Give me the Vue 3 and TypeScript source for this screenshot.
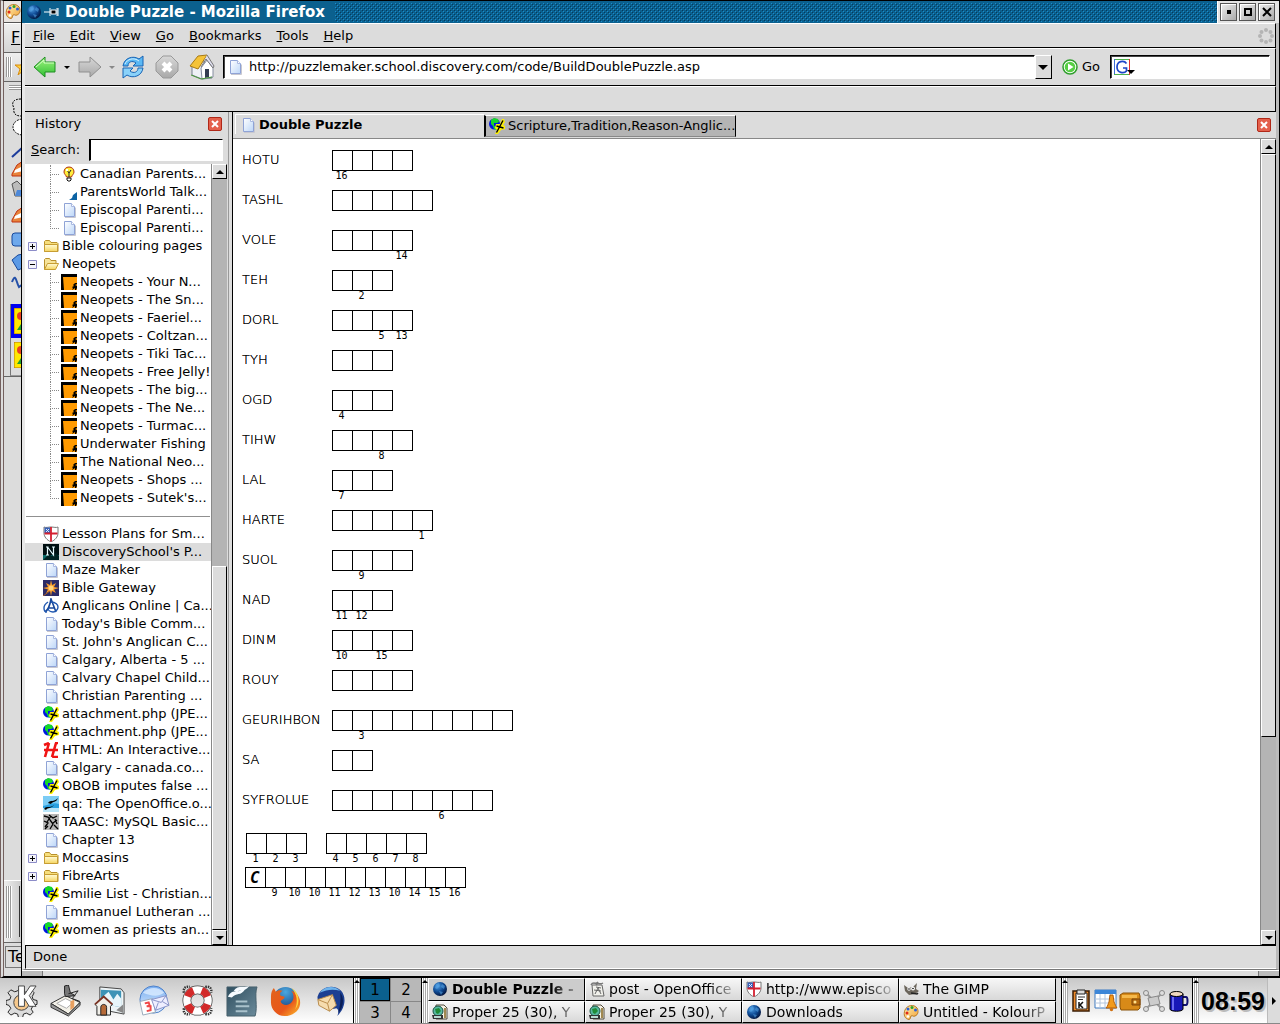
<script setup lang="ts">
interface TreeRow {
  label?: string
  icon?: string
  nested?: boolean
  last?: boolean
  fold?: 'open' | 'closed'
  selected?: boolean
  rule?: boolean
}

interface Word {
  text: string
  cells: string[]
}

const icons: Record<string, string> = {
  page: '<path d="M3.500 1.500h7l3 3v10h-10z" fill="url(#gPage)" stroke="#8fa3d6"/><path d="M10.500 1.500v3h3" fill="#fff" stroke="#a9b8e0"/><path d="M4 15.500h10.500v-10" fill="none" stroke="#c8c8d0"/>',
  folder: '<path d="M1.500 13.500v-10l1-1h4l1.500 2h6l1 1v8z" fill="#f7df7c" stroke="#b8902c"/><path d="M1.500 13.500v-7h13v7z" fill="url(#gFold)" stroke="#c79d33"/>',
  folderOpen: '<path d="M1.500 13.500v-10l1-1h4l1.500 2h5v3" fill="#f7e49a" stroke="#b8902c"/><path d="M1.500 13.500l3-6h11l-3 6z" fill="url(#gFold)" stroke="#c79d33"/>',
  bulb: '<path d="M8 1c3 0 5 2 5 5 0 2-2 3-2.500 5h-5C5 9 3 8 3 6c0-3 2-5 5-5z" fill="#ffee3c" stroke="#b03010"/><path d="M6 4l2 3 2-3M8 7v4" stroke="#222" fill="none"/><path d="M6 12h4v2l-1 1H7l-1-1z" fill="#fff" stroke="#111"/><path d="M5 3h2v2H5z" fill="#fff"/>',
  corner: '<path d="M16 8v8H8l3-2 1-3z" fill="#0c63a4"/>',
  neo: '<path d="M0 0h16v16H0z" fill="#000"/><path d="M2 3h14v13H3z" fill="#ff9a00"/><path d="M11 16l1-2-1-1 2-1-1-1 2-2h2v1l-2 1 2 1v2l-1 2h-1v-2z" fill="#000"/>',
  shield: '<path d="M1 1c2 1 4 0 7 0s5 1 7 0v6c0 4-3 7-7 9-4-2-7-5-7-9z" fill="#fff" stroke="#777"/><path d="M1.500 1.500h6V7h-6z" fill="#3a63b8"/><path d="M8 1v14.500M1.500 7.500h13" stroke="#d42030" stroke-width="1.800"/><path d="M3 3l3 3M6 3L3 6" stroke="#dfe8ff"/>',
  disc: '<path d="M0 0h16v16H0z" fill="#001012"/><path d="M0 11h16v5H0z" fill="#0a6a68"/><path d="M0 16l6-6 3 2 4-3 3 3v4z" fill="#022"/><path d="M3 3h2.500M4.500 3v8M3 11h3M4.500 3l6 8V3M9 3h3" stroke="#e8fbff" fill="none" stroke-width="1.200"/>',
  gateway: '<path d="M0 0h16v16H0z" fill="#2b2a66"/><path d="M8 0l1.200 5L13 3l-2 4 5 1-5 1.500 2 3.500-4-2-1 5-1-5-4 2 2-3.500L0 8l5-1-2-4 4 2z" fill="#f59a2c"/><circle cx="8" cy="8" r="2.500" fill="#ffd27a"/><path d="M0 16l7-5" stroke="#a65f28"/>',
  anglican: '<path d="M2 14c3-2 5-7 6-13l5 13M5 10h6" fill="none" stroke="#17479a" stroke-width="1.600"/><path d="M8 4c5 0 7 3 7 5s-2 5-5 5-5-2-5-4M5 4C2 6 1 8 1 10s1 4 3 4" fill="none" stroke="#2158b0" stroke-width="1.400"/>',
  ship: '<circle cx="5.500" cy="6" r="5.500" fill="#0018e0"/><path d="M2 2l3-2 4 1 1 3-2 1H5v3l3 1v3l-3-1-1-3-2-2z" fill="#14d828"/><path d="M6 16l2-4-2-2 1-4h4l2-5h2l1 3-2 3 2 1v3l-4 1-3 4z" fill="#fff200"/><path d="M7.500 14.500L14 2.500M7.500 8l7 2" stroke="#000" stroke-width="1.400" fill="none"/>',
  h: '<path d="M1 3l5-2M6 1L2 15M13 1l-4 14M12 1h3M1 8h14M9 15h6" stroke="#f01414" stroke-width="2.600" fill="none"/>',
  oo: '<path d="M0 0h16v16H0z" fill="#2aa0e0"/><path d="M0 0h16v8C10 6 6 9 0 10z" fill="#7cccf4"/><path d="M0 12h16v4H0z" fill="#b9e6fa"/><path d="M5 7c3-4 5 0 10-5-2 5-5 3-7 6zM1 13c3-4 5 0 10-4-3 4-6 2-8 5z" fill="#000"/>',
  taasc: '<path d="M0 0h16v16H0z" fill="#b6b6b6"/><path d="M1 2l4 1 2 3M6 1l4 3 4-2M1 7l4 2-3 4M7 6l3 4-3 5M10 9l4-3M11 11l4 4M2 15l3-3M8 2l-4 6M12 5l2 5" stroke="#000" stroke-width="1.300" fill="none"/>',
  globe: '<circle cx="8" cy="8" r="7" fill="url(#gGlobe)"/><path d="M4 3l3-1 1 3-3 3-2-1zM10 3l3 2-1 3-3-2zM7 10l4 1-2 3z" fill="#5aa7e8" opacity=".55"/>',
  palette: '<path d="M2 6C4 1 11 0 14 4c2 3 1 7-2 8-2 1-2-1-4 0-1 1 0 3-2 3.500C2 15 0 11 2 6z" fill="url(#gPal)" stroke="#b97a24"/><circle cx="5" cy="5" r="1.500" fill="#2a60d8"/><circle cx="9" cy="3.500" r="1.500" fill="#2ba52b"/><circle cx="12.500" cy="6" r="1.500" fill="#2a60d8"/><circle cx="4" cy="9" r="1.500" fill="#e02a1a"/><circle cx="5" cy="12.500" r="1.300" fill="#fff"/>',
  go: '<circle cx="8" cy="8" r="7" fill="#fff" stroke="#2f9e2c" stroke-width="1.500"/><circle cx="8" cy="8" r="5.300" fill="#55cf43"/><path d="M6 4.500v7L11.500 8z" fill="#fff"/>',
  google: '<path d="M.5.5h15v15H.5z" fill="#fff"/><path d="M0 .5h15" stroke="#4fb04f"/><path d="M.5 0v15" stroke="#3c6bd8"/><path d="M15.500 0v16" stroke="#e03030"/><path d="M0 15.500h15" stroke="#4fb04f"/><path d="M12.500 4.500C10 1 3 2 3 8s7 7 9.500 4V9H9" fill="none" stroke="#1d46c8" stroke-width="1.700"/>',
  post: '<path d="M3 4h10l2 11H4z" fill="#f1f1ec" stroke="#666"/><path d="M2 4c2-4 5 0 7-3M7 4c2-3 4 0 7-2" stroke="#777" fill="none" stroke-width="1.500"/><path d="M6 13l3-6 3 6M5 9l7 1M7 6l5 1" stroke="#666" fill="none"/>',
  web: '<path d="M4 1h8l3 3v11H4z" fill="#f5f1e4" stroke="#504a3c"/><path d="M13 4v10" stroke="#a08850" stroke-width="2"/><circle cx="6" cy="7" r="5" fill="#58b8a0" stroke="#175040"/><path d="M3 5l4-1 2 3-3 3-2-1z" fill="#1f8b36"/><path d="M0 11h11v4H1z" fill="#333"/><path d="M2 12h7v2H2z" fill="#b8d8d0"/>',
  gimp: '<path d="M1 4l4 3 5-1 4-4-1 6 3 2-4 3-6 1-4-4z" fill="#6b655b"/><circle cx="6" cy="8" r="1.700" fill="#fff"/><circle cx="10" cy="7.500" r="1.900" fill="#fff"/><circle cx="10" cy="7.500" r=".8"/><circle cx="6" cy="8" r=".8"/><path d="M8 12l6 1 1-1" stroke="#222" stroke-width="1.500" fill="none"/>',
}

const bigIcons: Record<string, string> = {
  kmenu: '<path d="M14 3h4l1 4 4 1 3-3 3 3-2 4 1 3 4 1v4l-4 1-2 4 2 3-3 3-4-2-3 1-1 4h-4l-1-4-3-1-4 2-3-3 3-4-2-3-3-1v-4l4-1 1-3-3-4 3-3 4 2 3-1z" fill="#dcdcdc" stroke="#222"/><circle cx="16" cy="18" r="8" fill="#f6c88c" stroke="#444"/><path d="M13 1h6v9l6-9h6l-7 10 7 11h-7l-5-8v8h-6z" fill="#fff" stroke="#444"/>',
  desk: '<path d="M1 19l15-8 15 7-12 12z" fill="#f3f1e8" stroke="#333"/><path d="M1 19v4l18 9 12-11v-3L19 30z" fill="#999" stroke="#333"/><path d="M7 19l9-5 8 4-7 6z" fill="#fff" stroke="#aaa"/><path d="M15 1l4-1 2 8 5 3-10 1-1-3z" fill="#777" stroke="#222"/><path d="M21 17l4-2v8l-4 3z" fill="#e8a060"/><path d="M19 9l10-3-6 8 8 3" stroke="#222" fill="none"/>',
  home: '<path d="M6 2l22 2 3 4v22l-25-5z" fill="#eef4f6" stroke="#444"/><path d="M7 5l21 1v17L7 19z" fill="#3d93b6"/><path d="M7 14l8-7 5 8 4-6 4 5v9L7 19z" fill="#e8f5fa"/><path d="M1 20l9-8 9 8-2 2v9H3v-9z" fill="#f1efe9" stroke="#222"/><path d="M1 20l9-8 9 8" stroke="#7c3525" stroke-width="2" fill="none"/><path d="M7 31v-8c0-4 6-4 6 0v8z" fill="#b66a38" stroke="#222"/><path d="M23 26l7-6v9z" fill="#888"/>',
  contact: '<circle cx="16" cy="15" r="14" fill="url(#gContact)" stroke="#4d80c8"/><path d="M5 8c7-7 17-6 22 0-7 5-14 3-22 0z" fill="#dcecff" opacity=".8"/><path d="M2 17l13-3 3 14-13 3z" fill="#fff" stroke="#9ab"/><path d="M7 19l4-1 1 3-3 1 4 0 0 4-4 1" stroke="#f04848" stroke-width="2" fill="none"/><path d="M14 15l15-4 3 10-14 5z" fill="#eef" stroke="#8893c8"/><path d="M14 15l10 3 5-7M18 26l3-8M32 21l-7-4" stroke="#8893c8" fill="none"/>',
  ring: '<path d="M2 8c-1-5 2-7 6-6M24 2c5-1 7 2 6 6M2 24c-1 5 2 7 6 6M24 30c5 1 7-2 6-6" fill="none" stroke="#333" stroke-width="2.500" stroke-dasharray="1.500 1"/><circle cx="16" cy="16" r="11" fill="none" stroke="#444" stroke-width="9"/><circle cx="16" cy="16" r="11" fill="none" stroke="#fff" stroke-width="7.500"/><circle cx="16" cy="16" r="11" fill="none" stroke="#d22a2a" stroke-width="7.500" stroke-dasharray="8.640 8.640" stroke-dashoffset="-4"/>',
  office: '<path d="M1 2h31c-3 8 1 20-2 30H1z" fill="url(#gOffice)" stroke="#46606c"/><path d="M2 12c5-9 8-3 18-8-5 8-9 3-14 9zM8 6c5-7 8-2 16-5-5 7-9 3-13 6z" fill="#f6fbff"/><path d="M10 17h12M10 22h14M10 27h12" stroke="#aac2cc" stroke-width="2"/>',
  firefox: '<circle cx="16" cy="15" r="13" fill="url(#gGlobe2)"/><path d="M1 12c0-4 1-7 3-9l2 4c2-2 5-2 7-1-3 2-3 3-2 5l4 1c0 3-4 3-4 5 1 4 8 5 11 1 3-3 3-8 0-12 6 2 10 8 9 14-1 7-8 12-16 12C7 32 1 25 1 18z" fill="url(#gFox)"/><path d="M22 3c8 4 10 15 4 22 3-8 2-16-4-22z" fill="#ffd23c"/>',
  bird: '<path d="M4 11C8 1 21-1 28 6c6 7 4 18-4 26 2-5 1-7-1-8-6 2-14 0-18-6-1-3-2-5-1-7z" fill="#1c3f92"/><path d="M6 8c6-8 16-7 21-2-8-2-14-1-21 2z" fill="#6fb4ec"/><path d="M27 8c5 6 3 16-2 21 2-8 3-14 2-21z" fill="#0b1f58"/><path d="M4 15l15-5 4 11-7 6-11-6z" fill="#f6dcae" stroke="#b98b4a"/><path d="M4 15l10 4 5-9M14 19l2 8" fill="none" stroke="#b98b4a"/>',
  clip: '<path d="M3 2h16v20H3z" fill="#ee8a2a" stroke="#3a1c04" stroke-width="1.500"/><path d="M6 4h11v16H6z" fill="#fff" stroke="#222"/><path d="M7 1h8v4H7z" fill="#ddd" stroke="#222"/><path d="M8 8h7M8 10.500h5" stroke="#333"/><path d="M9 13v6M13 13l-3 3 3 3" stroke="#111" stroke-width="1.500" fill="none"/>',
  alarm: '<path d="M1 1h21v18H1z" fill="#fff" stroke="#3a78c0"/><path d="M1 1h21v4H1z" fill="#3c86d8"/><path d="M1 10h21M1 14h21M6 5v14M11 5v14M16 5v14" stroke="#b4c6de"/><path d="M16 6l3 0 1 7c1 2 2 5 3 6H12c2-2 2-4 3-6z" fill="#f29a1c" stroke="#b35c08"/><circle cx="17.500" cy="20.500" r="1.700" fill="#d07010"/>',
  wallet: '<path d="M2 6l3-2h16l1 3v12l-2 2H3l-1-3z" fill="#d88a18" stroke="#8a5208"/><path d="M4 6h15v3H4z" fill="#f5b84a"/><path d="M14 10h8v6h-8z" fill="#b46a10" stroke="#7a4408"/><circle cx="17" cy="13" r="1.500" fill="#ffe08a"/>',
  net: '<path d="M4 4l16 16M20 4L4 20" stroke="#999" stroke-width="2"/><path d="M6 9l10-2 2 8-10 2z" fill="#ccc" stroke="#888"/><g fill="#ddd" stroke="#888"><circle cx="4" cy="4" r="2.500"/><circle cx="20" cy="4" r="2.500"/><circle cx="4" cy="20" r="2.500"/><circle cx="20" cy="20" r="2.500"/></g>',
  mug: '<path d="M17 8h3c2 0 2 8 0 8h-3" fill="none" stroke="#101070" stroke-width="2"/><path d="M4 5v15c0 3 13 3 13 0V5z" fill="#1818b8" stroke="#000"/><path d="M7 8v13" stroke="#6a6af0" stroke-width="2"/><ellipse cx="10.500" cy="5" rx="6.500" ry="2.500" fill="#f0d8c0" stroke="#000"/>',
}

const menus = ['File', 'Edit', 'View', 'Go', 'Bookmarks', 'Tools', 'Help']

const neo = (label: string, last = false): TreeRow => ({ label, icon: 'neo', nested: true, last })

const rows: TreeRow[] = [
  { label: 'Canadian Parents...', icon: 'bulb', nested: true },
  { label: 'ParentsWorld Talk...', icon: 'corner', nested: true },
  { label: 'Episcopal Parenti...', icon: 'page', nested: true },
  { label: 'Episcopal Parenti...', icon: 'page', nested: true, last: true },
  { label: 'Bible colouring pages', icon: 'folder', fold: 'closed' },
  { label: 'Neopets', icon: 'folderOpen', fold: 'open' },
  neo('Neopets - Your N...'),
  neo('Neopets - The Sn...'),
  neo('Neopets - Faeriel...'),
  neo('Neopets - Coltzan...'),
  neo('Neopets - Tiki Tac...'),
  neo('Neopets - Free Jelly!'),
  neo('Neopets - The big...'),
  neo('Neopets - The Ne...'),
  neo('Neopets - Turmac...'),
  neo('Underwater Fishing'),
  neo('The National Neo...'),
  neo('Neopets - Shops ...'),
  neo("Neopets - Sutek's...", true),
  { rule: true },
  { label: 'Lesson Plans for Sm...', icon: 'shield' },
  { label: "DiscoverySchool's P...", icon: 'disc', selected: true },
  { label: 'Maze Maker', icon: 'page' },
  { label: 'Bible Gateway', icon: 'gateway' },
  { label: 'Anglicans Online | Ca...', icon: 'anglican' },
  { label: "Today's Bible Comm...", icon: 'page' },
  { label: "St. John's Anglican C...", icon: 'page' },
  { label: 'Calgary, Alberta - 5 ...', icon: 'page' },
  { label: 'Calvary Chapel Child...', icon: 'page' },
  { label: 'Christian Parenting ...', icon: 'page' },
  { label: 'attachment.php (JPE...', icon: 'ship' },
  { label: 'attachment.php (JPE...', icon: 'ship' },
  { label: 'HTML: An Interactive...', icon: 'h' },
  { label: 'Calgary - canada.co...', icon: 'page' },
  { label: 'OBOB imputes false ...', icon: 'ship' },
  { label: 'qa: The OpenOffice.o...', icon: 'oo' },
  { label: 'TAASC: MySQL Basic...', icon: 'taasc' },
  { label: 'Chapter 13', icon: 'page' },
  { label: 'Moccasins', icon: 'folder', fold: 'closed' },
  { label: 'FibreArts', icon: 'folder', fold: 'closed' },
  { label: 'Smilie List - Christian...', icon: 'ship' },
  { label: 'Emmanuel Lutheran ...', icon: 'page' },
  { label: 'women as priests an...', icon: 'ship' },
]

const words: Word[] = [
  { text: 'HOTU', cells: ['16', '', '', ''] },
  { text: 'TASHL', cells: ['', '', '', '', ''] },
  { text: 'VOLE', cells: ['', '', '', '14'] },
  { text: 'TEH', cells: ['', '2', ''] },
  { text: 'DORL', cells: ['', '', '5', '13'] },
  { text: 'TYH', cells: ['', '', ''] },
  { text: 'OGD', cells: ['4', '', ''] },
  { text: 'TIHW', cells: ['', '', '8', ''] },
  { text: 'LAL', cells: ['7', '', ''] },
  { text: 'HARTE', cells: ['', '', '', '', '1'] },
  { text: 'SUOL', cells: ['', '9', '', ''] },
  { text: 'NAD', cells: ['11', '12', ''] },
  { text: 'DINM', cells: ['10', '', '15', ''] },
  { text: 'ROUY', cells: ['', '', '', ''] },
  { text: 'GEURIHBON', cells: ['', '3', '', '', '', '', '', '', ''] },
  { text: 'SA', cells: ['', ''] },
  { text: 'SYFROLUE', cells: ['', '', '', '', '', '6', '', ''] },
]

const finalGroups = [['1', '2', '3'], ['4', '5', '6', '7', '8']]
const finalLast = ['', '9', '10', '10', '11', '12', '13', '10', '14', '15', '16']

const launchers = [
  ['kmenu', 'K Menu'], ['desk', 'Show Desktop'], ['home', 'Home'], ['contact', 'Kontact'],
  ['ring', 'Help'], ['office', 'OpenOffice.org'], ['firefox', 'Firefox'], ['bird', 'Thunderbird'],
]

const tasks = [
  { icon: 'globe', label: 'Double Puzzle -', active: true },
  { icon: 'post', label: 'post - OpenOffice' },
  { icon: 'shield', label: 'http://www.episco' },
  { icon: 'gimp', label: 'The GIMP' },
  { icon: 'web', label: 'Proper 25 (30), Y' },
  { icon: 'web', label: 'Proper 25 (30), Y' },
  { icon: 'globe', label: 'Downloads' },
  { icon: 'palette', label: 'Untitled - KolourP' },
]

const tray = ['clip', 'alarm', 'wallet', 'net', 'mug']
</script>

<template>
  <div class="desktop">
    <svg class="defs" aria-hidden="true">
      <defs>
        <linearGradient id="gPage" x1="0" y1="0" x2="1" y2="1"><stop offset="0" stop-color="#fff" /><stop offset="1" stop-color="#bcd6f8" /></linearGradient>
        <linearGradient id="gFold" x1="0" y1="0" x2="0" y2="1"><stop offset="0" stop-color="#fffbd8" /><stop offset="1" stop-color="#f5d560" /></linearGradient>
        <radialGradient id="gGlobe" cx=".35" cy=".3" r=".8"><stop offset="0" stop-color="#4d9be0" /><stop offset=".5" stop-color="#0e4a94" /><stop offset="1" stop-color="#010a2c" /></radialGradient>
        <radialGradient id="gGlobe2" cx=".5" cy=".2" r=".9"><stop offset="0" stop-color="#4aa8e0" /><stop offset="1" stop-color="#0a2464" /></radialGradient>
        <linearGradient id="gPal" x1="0" y1="0" x2="1" y2="1"><stop offset="0" stop-color="#fff1b0" /><stop offset="1" stop-color="#f2a23a" /></linearGradient>
        <linearGradient id="gContact" x1="0" y1="0" x2="0" y2="1"><stop offset="0" stop-color="#79aef0" /><stop offset="1" stop-color="#e2efff" /></linearGradient>
        <linearGradient id="gOffice" x1="0" y1="0" x2="1" y2="1"><stop offset="0" stop-color="#2f4f60" /><stop offset="1" stop-color="#6d8c9c" /></linearGradient>
        <linearGradient id="gFox" x1="0" y1="0" x2="1" y2="1"><stop offset="0" stop-color="#e2641c" /><stop offset=".6" stop-color="#e8571a" /><stop offset="1" stop-color="#ffc22e" /></linearGradient>
        <linearGradient id="gGreen" x1="0" y1="0" x2="0" y2="1"><stop offset="0" stop-color="#a2f582" /><stop offset="1" stop-color="#2fbf32" /></linearGradient>
        <linearGradient id="gGray" x1="0" y1="0" x2="0" y2="1"><stop offset="0" stop-color="#d8d8d8" /><stop offset="1" stop-color="#a8a8a8" /></linearGradient>
        <pattern id="pDots" width="4" height="4" patternUnits="userSpaceOnUse">
          <path d="M0 0h1v1H0zM2 2h1v1H2z" fill="#1a8ccc" />
          <path d="M1 1h1v1H1zM3 3h1v1H3z" fill="#053a5c" />
        </pattern>
      </defs>
    </svg>

    <div class="stage">
      <div class="behind">
        <div class="b-title"><svg class="i16" viewBox="0 0 16 16" v-html="icons.palette" /></div>
        <div class="b-menu"><u>F</u></div>
        <div class="b-tool">
          <i class="vgrip" />
          <svg width="16" height="16" viewBox="0 0 16 16"><path d="M8 0l2 6h6l-5 4 2 6-5-4-5 4 2-6-5-4h6z" fill="#ffd23c" stroke="#d88a10" /></svg>
        </div>
        <div class="b-grip"><i /></div>
        <div class="b-box">
          <svg width="14" height="204" viewBox="0 0 14 204">
            <path d="M12 7c-8 0-10 4-7 9M5 16c-1 5 1 8 7 8" fill="none" stroke="#000" stroke-dasharray="2 1" />
            <ellipse cx="14" cy="35" rx="10" ry="8" fill="#fff" stroke="#000" stroke-dasharray="2 1" />
            <path d="M3 65l11-10" stroke="#1c3c9c" stroke-width="2" />
            <path d="M3 82l5-9 6-4v15H3z" fill="#e8843c" stroke="#c03010" /><path d="M6 78l8-4v5l-9 2z" fill="#fff" />
            <path d="M3 92l5-3 6 6v9H6z" fill="#bbb" stroke="#555" /><path d="M8 98h6v6H6z" fill="#4d88d8" />
            <path d="M3 128l5-9 6-4v15H3z" fill="#e8843c" stroke="#c03010" /><path d="M6 124l8-4v5l-9 2z" fill="#fff" />
            <rect x="3" y="141" width="16" height="13" rx="3" fill="#6ea8ec" stroke="#17489c" />
            <path d="M3 168l6-5 5-1v14l-5 2z" fill="#5c9ae6" stroke="#17489c" />
            <path d="M3 190c4-10 4 0 7 5l4-3" fill="none" stroke="#2450a8" stroke-width="2" />
          </svg>
        </div>
        <div class="b-opts">
          <div class="opt on"><svg width="10" height="26" viewBox="0 0 10 26"><path d="M0 0h10v26H0z" fill="#ffe800" stroke="#b87010" /><circle cx="7" cy="8" r="4" fill="#e84020" /><path d="M3 22l6-9v9z" fill="#20a030" /></svg></div>
          <div class="opt"><svg width="10" height="26" viewBox="0 0 10 26"><path d="M0 0h10v26H0z" fill="#ffe800" stroke="#b87010" /><circle cx="7" cy="8" r="4" fill="#e84020" /><path d="M3 22l6-9v9z" fill="#20a030" /></svg></div>
        </div>
        <div class="b-blank" />
        <div class="b-colors"><i class="vgrip" /><b /></div>
        <div class="b-status"><span>Te</span></div>
      </div>

      <main class="window">
        <header class="titlebar">
          <svg class="i16" viewBox="0 0 16 16" v-html="icons.globe" />
          <svg class="pin" width="16" height="10" viewBox="0 0 16 10"><path d="M0 5h6M6 1v8M7 3h5v4H7zM13 1v8M14 1v8" stroke="#fff" fill="#000" /></svg>
          <h1>Double Puzzle - Mozilla Firefox</h1>
          <svg class="dots" aria-hidden="true"><rect width="100%" height="100%" fill="url(#pDots)" /></svg>
          <div class="winbtns">
            <button aria-label="Minimize"><svg width="10" height="10" viewBox="0 0 10 10"><path d="M3 3h4v4H3z" /></svg></button>
            <button aria-label="Maximize"><svg width="10" height="10" viewBox="0 0 10 10"><path d="M2 2h6v6H2z" fill="none" stroke="#000" stroke-width="2" /></svg></button>
            <button aria-label="Close"><svg width="10" height="10" viewBox="0 0 10 10"><path d="M1 1l8 8M9 1L1 9" stroke="#000" stroke-width="2" /></svg></button>
          </div>
        </header>

        <div class="frame">
          <nav class="menubar">
            <button v-for="m in menus" :key="m"><u>{{ m[0] }}</u>{{ m.slice(1) }}</button>
            <svg class="throbber" width="16" height="16" viewBox="0 0 16 16" fill="#b4b4b4">
              <circle cx="8" cy="2" r="2" /><circle cx="12.500" cy="4" r="2" /><circle cx="14" cy="8" r="2" /><circle cx="12.500" cy="12.500" r="2" />
              <circle cx="8" cy="14" r="2" /><circle cx="3.500" cy="12.500" r="2" /><circle cx="2" cy="8" r="2" /><circle cx="3.500" cy="4" r="2" />
            </svg>
          </nav>

          <div class="toolbar">
            <button aria-label="Back"><svg width="24" height="24" viewBox="0 0 24 24"><path d="M1 12L12 2v5h10v10H12v5z" fill="url(#gGreen)" stroke="#1f8f22" stroke-linejoin="round" /><path d="M3 12l8-7v3h10" fill="none" stroke="#d4ffc4" /></svg></button>
            <i class="drop" />
            <button aria-label="Forward"><svg width="24" height="24" viewBox="0 0 24 24"><path d="M23 12L12 2v5H1v10h11v5z" fill="url(#gGray)" stroke="#909090" stroke-linejoin="round" /></svg></button>
            <i class="drop dim" />
            <button aria-label="Reload"><svg width="24" height="24" viewBox="0 0 24 24"><path d="M2 11C3 3 12 0 18 4l4-3v10H12l3-3c-4-3-8-1-8 3z" fill="#5ab8f4" stroke="#1763b4" stroke-linejoin="round" /><path d="M22 13c-1 8-10 11-16 7l-4 3V13h10l-3 3c4 3 8 1 8-3z" fill="#8ad2fa" stroke="#1763b4" stroke-linejoin="round" /><path d="M4 9c2-5 9-7 14-3" stroke="#d5f0ff" fill="none" /></svg></button>
            <button class="stop" aria-label="Stop"><svg width="24" height="24" viewBox="0 0 24 24"><path d="M8 1h8l7 7v8l-7 7H8l-7-7V8z" fill="url(#gGray)" stroke="#999" /><path d="M8 8l8 8M16 8l-8 8" stroke="#fff" stroke-width="4" /></svg></button>
            <button aria-label="Home"><svg width="26" height="26" viewBox="0 0 26 26"><path d="M3 11l9-5 11 7v11l-10 1-10-4z" fill="#eef1f6" stroke="#777f90" /><path d="M12 14l6-8 6 8v9l-11 2z" fill="#fff" stroke="#858da0" /><path d="M1 12L9 2l9-1-7 11-2 3z" fill="#f5c338" stroke="#a87a14" /><path d="M18 1l7 11-1 2-7-9-5 8" fill="#dde" stroke="#777" /><path d="M16 15h4v8l-4 1z" fill="#333c50" /><path d="M2 21l10 4 11-2" stroke="#4b9a3c" fill="none" /></svg></button>
            <div class="urlbox">
              <svg class="i16" viewBox="0 0 16 16" v-html="icons.page" />
              <input type="text" aria-label="Location" value="http://puzzlemaker.school.discovery.com/code/BuildDoublePuzzle.asp">
            </div>
            <button class="urldrop" aria-label="Show history"><i class="tri down wide" /></button>
            <button class="gobtn"><svg class="i16" viewBox="0 0 16 16" v-html="icons.go" /><span>Go</span></button>
            <div class="searchbox">
              <svg class="i16" viewBox="0 0 16 16" v-html="icons.google" />
              <i class="tri down" />
              <input type="text" aria-label="Web search">
            </div>
          </div>

          <div class="bookbar" />

          <div class="body">
            <aside class="sidebar">
              <div class="sidehead"><span>History</span><button class="xbtn" aria-label="Close sidebar"><svg width="8" height="8" viewBox="0 0 8 8"><path d="M1 1l6 6M7 1L1 7" stroke="#fff" stroke-width="2" /></svg></button></div>
              <div class="sidesearch"><label for="hist"><u>S</u>earch:</label><input id="hist" type="text"></div>
              <div class="treewrap">
                <ul class="tree">
                  <li v-for="(r, n) in rows" :key="n" :class="{ sel: r.selected, rule: r.rule }">
                    <template v-if="!r.rule">
                      <span v-if="r.nested" class="guide" :class="{ last: r.last }" />
                      <span v-else class="slot"><svg v-if="r.fold" width="9" height="9" viewBox="0 0 9 9"><path d="M.5.5h8v8h-8z" fill="#f4f4fa" stroke="#8c8cc8" /><path d="M2 4.500h5" stroke="#000" /><path v-if="r.fold === 'closed'" d="M4.500 2v5" stroke="#000" /></svg></span>
                      <svg class="i16" viewBox="0 0 16 16" v-html="icons[r.icon!]" />
                      <a href="#">{{ r.label }}</a>
                    </template>
                  </li>
                </ul>
                <div class="sbar side">
                  <button aria-label="Scroll up"><i class="tri up" /></button>
                  <div class="trough" /><div class="thumb" />
                  <button aria-label="Scroll down"><i class="tri down" /></button>
                </div>
              </div>
            </aside>
            <div class="splitter" />

            <section class="content">
              <div class="tabs">
                <button class="tab active"><svg class="i16" viewBox="0 0 16 16" v-html="icons.page" /><span>Double Puzzle</span></button>
                <button class="tab"><svg class="i16" viewBox="0 0 16 16" v-html="icons.ship" /><span>Scripture,Tradition,Reason-Anglic...</span></button>
                <button class="xbtn" aria-label="Close tab"><svg width="8" height="8" viewBox="0 0 8 8"><path d="M1 1l6 6M7 1L1 7" stroke="#fff" stroke-width="2" /></svg></button>
              </div>
              <div class="view">
                <article class="puzzle">
                  <div v-for="w in words" :key="w.text" class="word">
                    <span class="scramble">{{ w.text }}</span>
                    <div class="cells"><div v-for="(c, n) in w.cells" :key="n" class="cell"><b /><small>{{ c }}</small></div></div>
                  </div>
                  <div class="final">
                    <div v-for="(g, k) in finalGroups" :key="k" class="cells"><div v-for="c in g" :key="c" class="cell"><b /><small>{{ c }}</small></div></div>
                  </div>
                  <div class="cells closing"><div v-for="(c, n) in finalLast" :key="n" class="cell"><b>{{ n === 0 ? 'C' : '' }}</b><small>{{ c }}</small></div></div>
                </article>
                <div class="sbar main">
                  <button aria-label="Scroll up"><i class="tri up" /></button>
                  <div class="thumb" /><div class="trough" />
                  <button aria-label="Scroll down"><i class="tri down" /></button>
                </div>
              </div>
            </section>
          </div>

          <footer class="status">Done</footer>
        </div>
        <div class="resize"><i /><b /><i /></div>
      </main>
    </div>

    <div class="panel">
      <div class="launch">
        <button v-for="l in launchers" :key="l[0]" :aria-label="l[1]"><svg width="32" height="32" viewBox="0 0 33 33" v-html="bigIcons[l[0]]" /></button>
      </div>
      <div class="handle"><i class="tri up" /></div>
      <div class="pager"><button v-for="d in 4" :key="d" :class="{ on: d === 1 }">{{ d }}</button></div>
      <div class="handle"><i class="tri up" /></div>
      <div class="tasks">
        <button v-for="(t, n) in tasks" :key="n" :class="{ active: t.active }"><svg class="i16" viewBox="0 0 16 16" v-html="icons[t.icon]" /><span>{{ t.label }}</span></button>
      </div>
      <div class="pad" />
      <div class="handle"><i class="tri up" /></div>
      <div class="tray"><svg v-for="t in tray" :key="t" width="24" height="24" viewBox="0 0 24 24" v-html="bigIcons[t]" /></div>
      <div class="handle"><i class="tri up" /></div>
      <time class="clock">08:59</time>
      <button class="hide" aria-label="Hide panel"><i /></button>
    </div>
  </div>
</template>

<style>
html,
body {
  margin: 0;
  background: #dcdcdc;
}
</style>

<style scoped>
* {
  box-sizing: border-box;
}
.desktop {
  display: flex;
  flex-direction: column;
  min-height: 100vh;
  font: 13px/18px "DejaVu Sans", sans-serif;
  color: #000;
  background: #dcdcdc;
}
button {
  margin: 0;
  padding: 0;
  border: 0;
  background: none;
  font: inherit;
  color: inherit;
}
input {
  min-width: 0;
  padding: 0;
  border: 0;
  outline: 0;
  background: none;
  font: inherit;
  color: #000;
}
svg {
  display: block;
  flex: none;
}
.defs {
  position: absolute;
  width: 0;
  height: 0;
}
.i16 {
  width: 16px;
  height: 16px;
}
.tri {
  width: 0;
  height: 0;
  border: 4px solid transparent;
}
.tri.up {
  border-top: 0;
  border-bottom-color: #000;
}
.tri.down {
  border-bottom: 0;
  border-top-color: #000;
}
.tri.wide {
  border-width: 5px 5px 0;
}
.stage {
  flex: 1;
  display: flex;
}

/* Sliver of the paint window behind the browser */
.behind {
  flex: none;
  width: 21px;
  display: flex;
  flex-direction: column;
  overflow: hidden;
  border-top: 1px solid #000;
  border-left: 4px double #74605e;
  border-bottom: 2px solid #000;
}
.b-title {
  height: 22px;
  padding: 2px 0 0 1px;
  background: #e8e4e0;
  border-bottom: 1px solid #555;
}
.b-menu {
  height: 30px;
  padding: 4px 0 0 7px;
  font-size: 16px;
  line-height: 20px;
  border-top: 1px solid #fff;
  border-bottom: 1px solid #666;
  background: linear-gradient(#eee, #d4d4d4);
}
.b-tool {
  display: flex;
  align-items: center;
  gap: 3px;
  height: 29px;
  padding-left: 2px;
  border-bottom: 1px solid #666;
  background: linear-gradient(#eee, #d4d4d4);
}
.vgrip {
  flex: none;
  width: 6px;
  height: 20px;
  background: repeating-linear-gradient(90deg, #999 0 1px, #fff 1px 2px);
}
.b-grip {
  height: 10px;
  padding: 3px 0 0 5px;
}
.b-grip i {
  display: block;
  height: 5px;
  background: repeating-linear-gradient(#999 0 1px, #fff 1px 2px);
}
.b-box {
  height: 212px;
  padding: 0 0 0 5px;
}
.b-opts {
  height: 72px;
  border-left: 1px solid #777;
  border-bottom: 1px solid #999;
  margin-left: 6px;
}
.opt {
  height: 34px;
  padding: 4px 0 4px 3px;
}
.opt.on {
  background: #0000f0;
}
.b-blank {
  flex: 1;
  border-top: 1px solid #666;
}
.b-colors {
  display: flex;
  height: 63px;
  padding: 5px 0 5px 2px;
  gap: 7px;
  border-top: 1px solid #fff;
  border-bottom: 1px solid #666;
  background: linear-gradient(90deg, #eee, #ccc);
}
.b-colors .vgrip {
  height: 52px;
}
.b-colors b {
  width: 4px;
  border-left: 1px solid #333;
}
.b-status {
  height: 33px;
  padding-top: 3px;
  border-bottom: 8px solid #dcdcdc;
}
.b-status span {
  display: block;
  margin-left: 1px;
  padding: 1px 0 1px 2px;
  border: 1px solid #777;
  border-right: 0;
  font-size: 16px;
}

/* Browser window */
.window {
  flex: 1;
  min-width: 0;
  display: flex;
  flex-direction: column;
  border: 1px solid #000;
  border-bottom-width: 2px;
}
.titlebar {
  display: flex;
  align-items: center;
  height: 22px;
  padding-left: 4px;
  background: #0b608e;
}
.pin {
  margin: 0 5px 0 2px;
}
h1 {
  margin: 0;
  color: #fff;
  font-size: 15px;
  line-height: 20px;
  white-space: nowrap;
}
.dots {
  flex: 1;
  min-width: 0;
  height: 19px;
  margin-left: 10px;
}
.winbtns {
  display: flex;
  align-items: center;
  gap: 2px;
  height: 22px;
  padding: 0 4px 0 2px;
  background: #e4e4e4;
  border-left: 1px solid #fff;
}
.winbtns button {
  display: flex;
  align-items: center;
  justify-content: center;
  width: 17px;
  height: 18px;
  border: 1px solid #555;
  box-shadow: inset 1px 1px #fff;
  background: linear-gradient(135deg, #eee, #aaa);
}
.frame {
  flex: 1;
  display: flex;
  flex-direction: column;
  border-style: solid;
  border-width: 0 3px 1px;
  border-color: #bbb #bbb #777 #e8e8e8;
}
.menubar {
  display: flex;
  align-items: center;
  height: 25px;
  border-top: 1px solid #fff;
  border-bottom: 1px solid #000;
  border-right: 1px solid #000;
}
.menubar button {
  padding: 0 7px 0 8px;
}
.throbber {
  margin-left: auto;
  margin-right: 1px;
}
.toolbar {
  display: flex;
  align-items: center;
  height: 38px;
  padding: 0 5px 0 8px;
  border-top: 1px solid #fff;
  border-bottom: 1px solid #000;
  border-right: 1px solid #000;
}
.drop {
  flex: none;
  width: 6px;
  margin: 0 8px 0 7px;
  border: 3px solid transparent;
  border-top-color: #000;
  border-bottom: 0;
}
.drop.dim {
  margin-right: 6px;
  border-top-color: #888;
}
.stop {
  margin: 0 10px;
}
.urlbox,
.searchbox {
  display: flex;
  align-items: center;
  height: 24px;
  background: #fff;
  border: 1px solid #fff;
  border-top: 1px solid #000;
  border-left: 1px solid #000;
  box-shadow: inset 1px 1px #444;
}
.urlbox {
  flex: 1;
  min-width: 0;
  gap: 6px;
  margin-left: 8px;
  padding-left: 3px;
}
.urlbox input,
.searchbox input {
  flex: 1;
}
.urldrop {
  display: flex;
  align-items: center;
  justify-content: center;
  width: 17px;
  height: 24px;
  border: 1px solid #fff;
  border-right-color: #000;
  border-bottom-color: #000;
  background: #dcdcdc;
}
.gobtn {
  display: flex;
  align-items: center;
  gap: 4px;
  margin: 0 10px;
}
.searchbox {
  width: 160px;
  padding-left: 3px;
}
.searchbox .tri {
  margin: 10px 0 0 -3px;
}
.bookbar {
  height: 26px;
  border-top: 1px solid #fff;
  border-bottom: 1px solid #000;
  border-right: 1px solid #000;
}
.body {
  flex: 1;
  display: flex;
}
.sidebar {
  flex: none;
  width: 203px;
  display: flex;
  flex-direction: column;
}
.sidehead {
  display: flex;
  align-items: center;
  justify-content: space-between;
  height: 24px;
  padding: 0 6px 0 10px;
}
.xbtn {
  display: flex;
  align-items: center;
  justify-content: center;
  width: 14px;
  height: 14px;
  border: 1px solid #b02818;
  border-radius: 2px;
  background: #e4604c;
}
.sidesearch {
  display: flex;
  align-items: center;
  justify-content: space-between;
  height: 28px;
  padding: 0 5px 0 6px;
}
.sidesearch input {
  width: 134px;
  height: 22px;
  background: #fff;
  border: 1px solid #fff;
  border-top: 1px solid #000;
  border-left: 2px solid #000;
}
.treewrap {
  flex: 1;
  display: flex;
  padding-right: 1px;
}
.tree {
  flex: 1;
  min-width: 0;
  margin: 0;
  padding: 1px 0 0;
  list-style: none;
  background: #fff;
}
.tree li {
  display: flex;
  align-items: center;
  height: 18px;
  white-space: nowrap;
}
.tree li.sel {
  background: #dcdcdc;
}
.tree li.rule::before {
  content: "";
  flex: 1;
  height: 1px;
  margin: 0 1px;
  background: #909090;
}
.tree a {
  margin-left: 3px;
  color: #000;
  text-decoration: none;
}
.slot {
  flex: none;
  width: 18px;
  padding-left: 3px;
}
.guide {
  flex: none;
  width: 9px;
  height: 18px;
  margin: 0 2px 0 25px;
}
.guide::before,
.guide::after {
  content: "";
  display: block;
  height: 9px;
  border-left: 1px dotted #888;
}
.guide::before {
  border-bottom: 1px dotted #888;
}
.guide.last::after {
  border-left: 0;
}
.sbar {
  flex: none;
  display: flex;
  flex-direction: column;
  width: 16px;
  border-left: 1px solid #888;
}
.sbar button,
.thumb {
  border: 1px solid #fff;
  border-right-color: #000;
  border-bottom-color: #000;
  background: #dcdcdc;
}
.sbar button {
  display: flex;
  align-items: center;
  justify-content: center;
  height: 15px;
}
.trough {
  background: #b4b4b4;
}
.side .trough {
  flex: 388;
}
.side .thumb {
  flex: 362;
}
.main .trough {
  flex: 194;
}
.main .thumb {
  flex: 582;
}
.splitter {
  width: 5px;
  border-left: 1px solid #999;
  border-right: 1px solid #000;
  background: #dcdcdc;
}
.content {
  flex: 1;
  min-width: 0;
  display: flex;
  flex-direction: column;
}
.tabs {
  display: flex;
  align-items: flex-start;
  height: 27px;
  padding: 2px 5px 0 2px;
  border-bottom: 1px solid #888;
}
.tab {
  display: flex;
  align-items: center;
  gap: 3px;
  width: 252px;
  height: 22px;
  margin-top: 1px;
  padding-left: 3px;
  white-space: nowrap;
  background: #b4b4b4;
  border: 1px solid #000;
  border-left-width: 2px;
  border-top-color: #fff;
  border-bottom-color: #888;
}
.tab.active {
  width: 249px;
  height: 20px;
  margin-top: 0;
  padding-left: 4px;
  background: #dcdcdc;
  border: 1px solid #fff;
  border-bottom: 0;
  border-right: 0;
  font-weight: bold;
}
.tabs .xbtn {
  margin: 4px 0 0 auto;
}
.view {
  flex: 1;
  display: flex;
  background: #fff;
}
.puzzle {
  flex: 1;
  padding: 11px 0 30px 9px;
}
.word {
  display: flex;
  height: 40px;
}
.scramble {
  width: 90px;
  line-height: 20px;
  font-weight: 200;
  text-shadow: 0 0 #000;
}
.cells {
  display: flex;
}
.cell {
  width: 20px;
}
.cell b {
  display: block;
  width: 21px;
  height: 21px;
  padding-left: 4px;
  border: 1px solid #000;
  font: italic bold 16px/19px "DejaVu Sans Mono", monospace;
}
.cell small {
  display: block;
  width: 19px;
  text-align: center;
  font: 10px/10px "DejaVu Sans Mono", monospace;
}
.final {
  display: flex;
  gap: 20px;
  height: 34px;
  margin: 3px 0 0 4px;
}
.closing {
  margin-left: 3px;
}
.status {
  height: 24px;
  padding: 0 7px;
  line-height: 21px;
  border-left: 1px solid #000;
  border-top: 1px solid #000;
  border-bottom: 1px solid #fff;
  background: #dcdcdc;
}
.resize {
  display: flex;
  height: 6px;
  border-top: 1px solid #fff;
  background: #dcdcdc;
}
.resize i {
  width: 20px;
  background: #bbb;
}
.resize b {
  flex: 1;
  border: solid #777;
  border-width: 0 1px;
}

/* Desktop panel */
.panel {
  display: flex;
  height: 46px;
  border-bottom: 1px solid #888;
}
.launch {
  display: flex;
  align-items: center;
  gap: 12px;
  width: 353px;
  padding-left: 6px;
  background: linear-gradient(#c8c8c8, #fff);
}
.handle {
  width: 7px;
  padding-top: 2px;
  border-left: 1px solid #000;
  background: repeating-linear-gradient(90deg, #fff 0 1px, #aaa 1px 2px);
}
.handle .tri {
  display: block;
  border-width: 0 3px 3px;
}
.pager {
  display: grid;
  grid-template-columns: 30px 30px;
  gap: 1px;
  width: 61px;
  background: #888;
}
.pager button {
  font-size: 15px;
  background: #b8b8b8;
}
.pager .on {
  background: #0b608e;
  border: 1px solid #000;
}
.tasks {
  flex: 1;
  display: grid;
  grid-template-columns: repeat(4, 1fr);
  grid-template-rows: 1fr 1fr;
}
.tasks button {
  display: flex;
  align-items: center;
  gap: 4px;
  min-width: 0;
  padding-left: 3px;
  font-size: 14px;
  text-align: left;
  border: 1px solid #fff;
  border-right-color: #000;
  border-bottom-color: #000;
  background: linear-gradient(#f6f6f6, #d8d8d8);
}
.tasks span {
  flex: 1;
  white-space: nowrap;
  mask-image: linear-gradient(90deg, #000 75%, transparent);
}
.tasks .active {
  font-weight: bold;
  background: #ccc;
}
.pad {
  width: 5px;
}
.tray {
  display: flex;
  align-items: center;
  width: 124px;
  padding-left: 2px;
  background: linear-gradient(#c8c8c8, #fff);
}
.clock {
  width: 68px;
  text-align: center;
  font: bold 25px/46px "Liberation Sans", sans-serif;
  text-shadow: 2px 2px #bbb;
  background: linear-gradient(#c8c8c8, #fff);
}
.hide {
  display: flex;
  align-items: center;
  justify-content: center;
  width: 13px;
  border-left: 1px solid #bbb;
}
.hide i {
  border: 4px solid transparent;
  border-left-color: #000;
  border-right: 0;
}
</style>
